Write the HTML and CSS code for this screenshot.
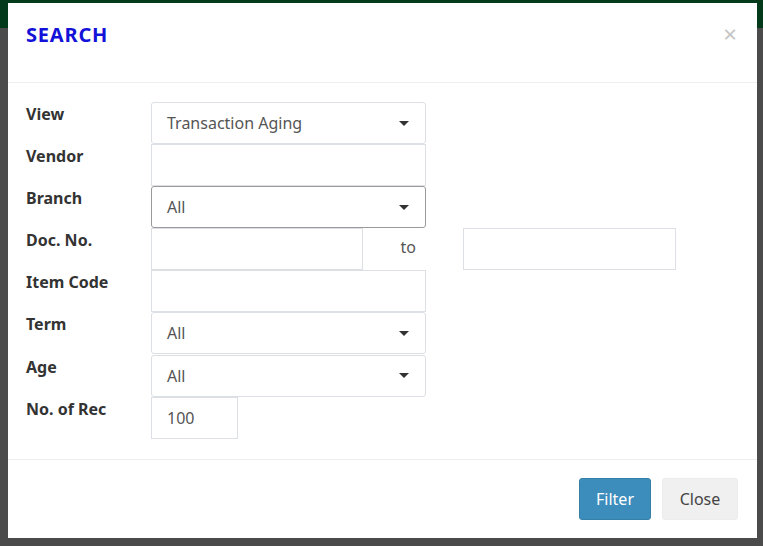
FILE: index.html
```html
<!DOCTYPE html>
<html>
<head>
<meta charset="utf-8">
<link rel="stylesheet" href="styles.css">
</head>
<body>
<div class="backdrop">
  <div class="topbar"></div>
  <div class="modal">
    <div class="modal-header">
      <h4 class="title">SEARCH</h4>
      <span class="close">&times;</span>
    </div>
    <div class="modal-body">
      <div class="row">
        <label class="lbl">View</label>
        <div class="select wide"><span>Transaction Aging</span><i class="caret"></i></div>
      </div>
      <div class="row">
        <label class="lbl">Vendor</label>
        <div class="input wide"></div>
      </div>
      <div class="row">
        <label class="lbl">Branch</label>
        <div class="select wide focus"><span>All</span><i class="caret"></i></div>
      </div>
      <div class="row">
        <label class="lbl">Doc. No.</label>
        <div class="group">
          <div class="input doc"></div>
          <div class="addon">to</div>
        </div>
        <div class="input doc2"></div>
      </div>
      <div class="row">
        <label class="lbl">Item Code</label>
        <div class="input wide"></div>
      </div>
      <div class="row">
        <label class="lbl">Term</label>
        <div class="select wide"><span>All</span><i class="caret"></i></div>
      </div>
      <div class="row">
        <label class="lbl">Age</label>
        <div class="select wide"><span>All</span><i class="caret"></i></div>
      </div>
      <div class="row">
        <label class="lbl">No. of Rec</label>
        <div class="input small"><span>100</span></div>
      </div>
    </div>
    <div class="modal-footer">
      <button class="btn primary">Filter</button>
      <button class="btn default">Close</button>
    </div>
  </div>
</div>
</body>
</html>
```
FILE: styles.css
```css
html, body {
  margin: 0;
  padding: 0;
  width: 763px;
  height: 546px;
  overflow: hidden;
  font-family: "Noto Sans", "Open Sans", sans-serif;
}
.backdrop {
  width: 763px;
  height: 546px;
  background: #4b4b4b;
  position: relative;
}
.topbar {
  height: 28px;
  background: #033a1c;
}
.modal {
  position: absolute;
  left: 8px;
  top: 3px;
  width: 749px;
  height: 535px;
  background: #fff;
  display: flex;
  flex-direction: column;
}
.modal-header {
  height: 79px;
  border-bottom: 1px solid #eeeeee;
  display: flex;
  align-items: flex-start;
  justify-content: space-between;
  padding: 0 20px 0 18px;
  box-sizing: content-box;
}
.title {
  margin: 18px 0 0 0;
  font-size: 20px;
  font-weight: 700;
  line-height: 28px;
  color: #1212d8;
  letter-spacing: 0.8px;
}
.close {
  margin-top: 17px;
  font-size: 24px;
  line-height: 28px;
  color: #c4c4c4;
  font-weight: 400;
}
.modal-body {
  padding: 19px 18px 0 18px;
  height: 357px;
  border-bottom: 1px solid #eeeeee;
}
.row {
  display: flex;
  align-items: flex-start;
  height: 42.1px;
}
.lbl {
  width: 125px;
  flex: none;
  font-size: 16px;
  font-weight: 700;
  color: #333;
  line-height: 24px;
}
.select, .input {
  box-sizing: border-box;
  height: 42px;
  border: 1px solid #dcdfe4;
  background: #fff;
  display: flex;
  align-items: center;
  padding: 0 15px;
  font-size: 16px;
  color: #555;
}
.select {
  border-radius: 3px;
  justify-content: space-between;
}
.select.focus {
  border-color: #9a9a9a;
}
.wide { width: 275px; }
.small { width: 87px; }
.caret {
  width: 0;
  height: 0;
  border-left: 5px solid transparent;
  border-right: 5px solid transparent;
  border-top: 5px solid #333;
  margin-right: 1px;
}
.group {
  display: flex;
  width: 275px;
}
.doc { width: 212px; }
.addon {
  width: 63px;
  height: 42px;
  box-sizing: border-box;
  padding: 0 10px 4px 0;
  display: flex;
  align-items: center;
  justify-content: flex-end;
  font-size: 16px;
  color: #555;
}
.doc2 {
  width: 213px;
  margin-left: 37px;
}
.modal-footer {
  flex: 1;
  display: flex;
  justify-content: flex-end;
  align-items: flex-start;
  padding: 18px 19px 0 0;
  gap: 11px;
}
.btn {
  height: 42px;
  border-radius: 3px;
  font-family: inherit;
  font-size: 16px;
  padding: 0 16px;
  border: 1px solid transparent;
  cursor: pointer;
}
.primary {
  width: 72px;
  background: #3c8dbc;
  border-color: #367fa9;
  color: #fff;
}
.default {
  width: 76px;
  background: #f0f0f0;
  border-color: #ececec;
  color: #444;
}
```
